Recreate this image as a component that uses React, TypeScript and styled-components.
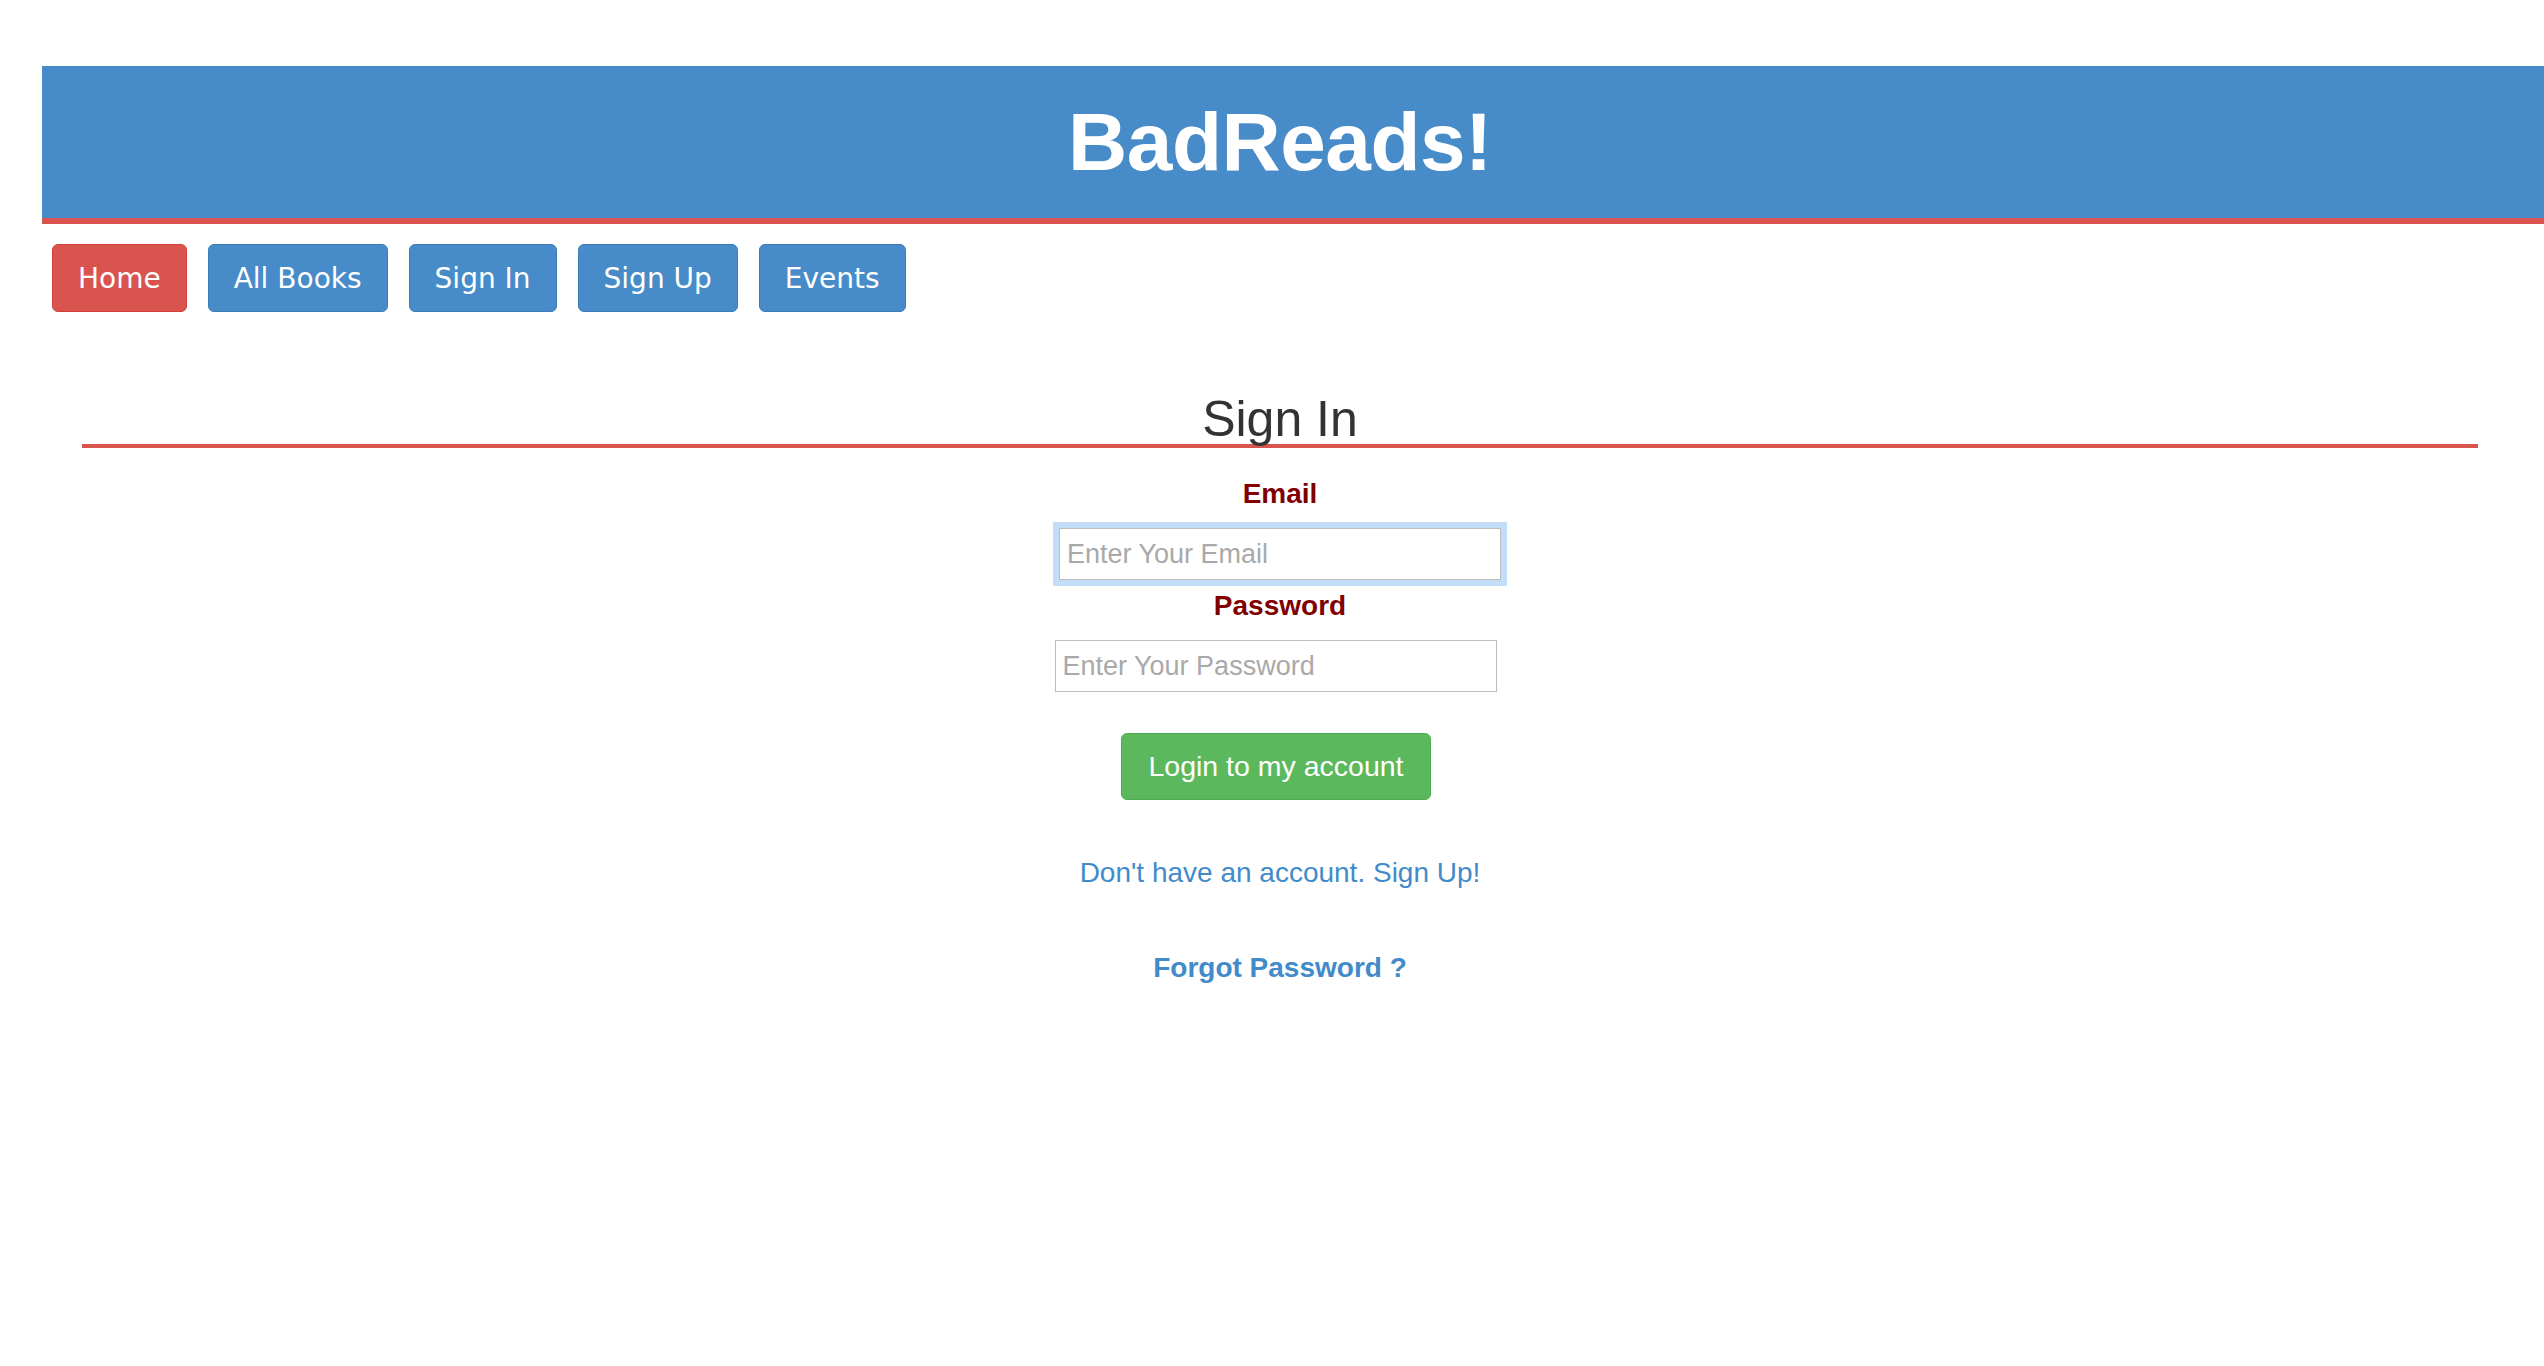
import React from 'react';
import { FC } from 'react';
import styled, { createGlobalStyle } from 'styled-components';

const GlobalStyle = createGlobalStyle`
  html, body {
    margin: 0;
    padding: 0;
    background: #ffffff;
  }
  body {
    font-family: 'Liberation Sans', Arial, Helvetica, sans-serif;
    color: #333333;
  }
`;

interface NavButtonProps {
  $active?: boolean;
}

const navItems = ['Home', 'All Books', 'Sign In', 'Sign Up', 'Events'];

const App: FC = () => {
  return (
    <Page>
      <GlobalStyle />
      <Header>
        <Title>BadReads!</Title>
      </Header>
      <Nav>
        {navItems.map((item, i) => (
          <NavButton key={item} $active={i === 0}>
            {item}
          </NavButton>
        ))}
      </Nav>
      <Main>
        <Heading>Sign In</Heading>
        <Form onSubmit={(e) => e.preventDefault()}>
          <Label htmlFor="email">Email</Label>
          <Input id="email" type="email" placeholder="Enter Your Email" autoFocus $focused />
          <Label htmlFor="password" $tight>
            Password
          </Label>
          <Input id="password" type="password" placeholder="Enter Your Password" $shift />
          <LoginButton type="submit">Login to my account</LoginButton>
          <Link href="#">Don't have an account. Sign Up!</Link>
          <Link href="#" $bold>
            Forgot Password ?
          </Link>
        </Form>
      </Main>
    </Page>
  );
};

const Page = styled.div`
  min-height: 1366px;
  padding-top: 66px;
  box-sizing: border-box;
`;

const Header = styled.header`
  margin-left: 42px;
  height: 152px;
  padding-right: 26px;
  background: #478cc8;
  border-bottom: 6px solid #d9534f;
  display: flex;
  align-items: center;
  justify-content: center;
`;

const Title = styled.h1`
  margin: 0;
  font-family: 'Liberation Sans', Arial, sans-serif;
  font-size: 82px;
  font-weight: 700;
  line-height: 1;
  color: #ffffff;
  letter-spacing: -0.5px;
`;

const Nav = styled.nav`
  display: flex;
  gap: 21px;
  margin: 20px 0 0 52px;
`;

const NavButton = styled.button<NavButtonProps>`
  height: 68px;
  padding: 0 25px;
  display: inline-flex;
  align-items: center;
  font-family: 'DejaVu Sans', Verdana, sans-serif;
  font-size: 28px;
  color: #ffffff;
  background: ${(props) => (props.$active ? '#d9534f' : '#478cc8')};
  border: 1px solid ${(props) => (props.$active ? '#d43f3a' : '#3b7dba')};
  border-radius: 6px;
  cursor: pointer;
`;

const Main = styled.main`
  margin: 82px 66px 0 82px;
`;

const Heading = styled.h2`
  margin: 0;
  font-family: 'Liberation Sans', Arial, sans-serif;
  font-size: 50px;
  font-weight: 400;
  line-height: 50px;
  text-align: center;
  color: #333333;
  border-bottom: 4px solid #d9534f;
`;

const Form = styled.form`
  display: flex;
  flex-direction: column;
  align-items: center;
  padding-top: 30px;
`;

interface LabelProps {
  $tight?: boolean;
}

const Label = styled.label<LabelProps>`
  font-family: 'Liberation Sans', Arial, sans-serif;
  font-size: 28px;
  font-weight: 700;
  line-height: 32px;
  color: #800000;
  margin-top: ${(props) => (props.$tight ? '10px' : '0')};
  margin-bottom: 18px;
`;

interface InputProps {
  $focused?: boolean;
  $shift?: boolean;
}

const Input = styled.input<InputProps>`
  box-sizing: border-box;
  width: 442px;
  height: 52px;
  padding: 0 7px;
  font-family: 'Liberation Sans', Arial, sans-serif;
  font-size: 27px;
  color: #333333;
  border: 1px solid #bdbdbd;
  border-radius: 0;
  outline: none;
  margin-right: ${(props) => (props.$shift ? '9px' : '0')};
  box-shadow: ${(props) => (props.$focused ? '0 0 0 6px #c2ddf8' : 'none')};
  caret-color: #222222;

  &::placeholder {
    color: #a9a9a9;
  }
`;

const LoginButton = styled.button`
  margin-top: 41px;
  height: 67px;
  padding: 0 26px;
  margin-right: 8px;
  font-family: 'Liberation Sans', Arial, sans-serif;
  font-size: 28.5px;
  color: #ffffff;
  background: #5cb85c;
  border: 1px solid #4cae4c;
  border-radius: 6px;
  cursor: pointer;
`;

interface LinkProps {
  $bold?: boolean;
}

const Link = styled.a<LinkProps>`
  margin-top: ${(props) => (props.$bold ? '63px' : '57px')};
  font-family: 'Liberation Sans', Arial, sans-serif;
  font-size: 28px;
  font-weight: ${(props) => (props.$bold ? 700 : 400)};
  line-height: 32px;
  color: #428bca;
  text-decoration: none;
`;

export default App;
